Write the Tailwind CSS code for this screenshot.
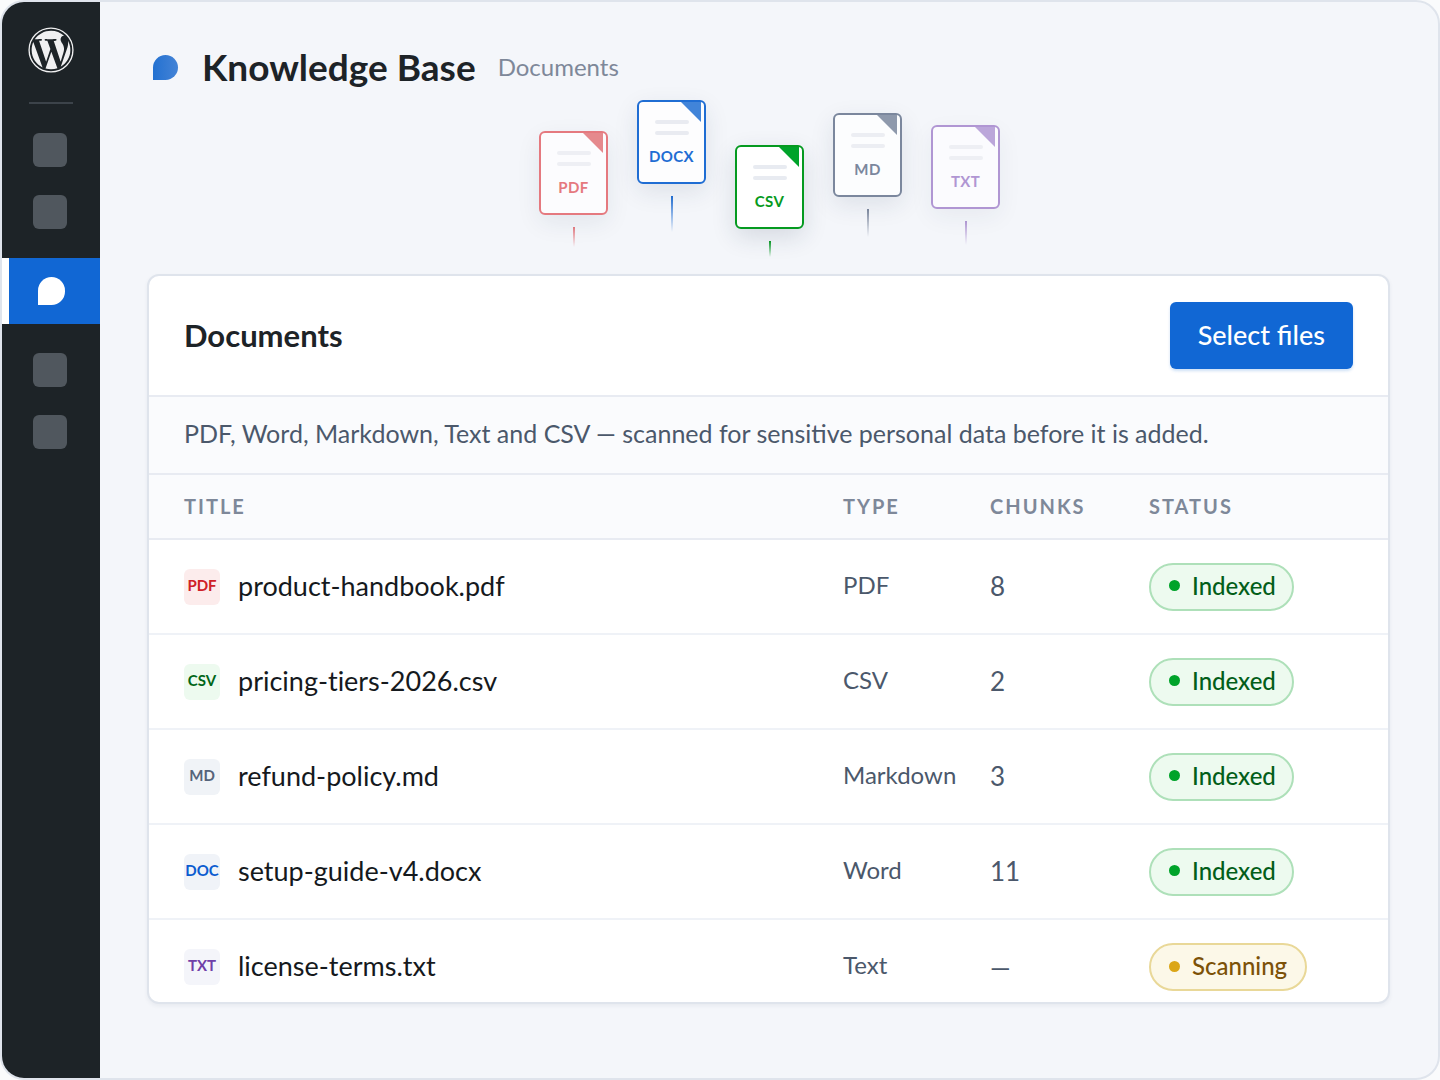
<!DOCTYPE html>
<html lang="en">
<head>
  <meta charset="UTF-8" />
  <meta name="viewport" content="width=device-width, initial-scale=1.0"/>
  <title>Knowledge Base - Documents</title>
  <script src="https://cdn.jsdelivr.net/npm/@tailwindcss/browser@4"></script>
</head>
<body class="bg-[#fafbfc] font-[Lato,'Open_Sans',sans-serif] text-[#1d2327]">

  <div class="flex min-h-screen overflow-hidden rounded-3xl border-2 border-[#dfe4ec] bg-[#f4f6fa]">

    <!-- Sidebar -->
    <nav class="flex w-[98px] shrink-0 flex-col items-center bg-[#1d2327] pt-6" aria-label="Admin menu">
      <a href="#" aria-label="WordPress">
        <svg class="size-12" viewBox="-0.7 -0.7 25.4 25.4" fill="#f0f0f1">
          <circle cx="12" cy="12" r="11.6" fill="none" stroke="#f0f0f1" stroke-width="0.7"/>
          <path transform="translate(0.6 0.6) scale(0.95)" d="M21.469 6.825c.84 1.537 1.318 3.3 1.318 5.175 0 3.979-2.156 7.456-5.363 9.325l3.295-9.527c.615-1.54.82-2.771.82-3.864 0-.405-.026-.78-.07-1.11m-7.981.105c.647-.03 1.232-.105 1.232-.105.582-.075.514-.93-.067-.899 0 0-1.755.135-2.88.135-1.064 0-2.85-.15-2.85-.15-.585-.03-.661.855-.075.885 0 0 .54.061 1.125.09l1.68 4.605-2.37 7.08L5.354 6.9c.649-.03 1.234-.1 1.234-.1.585-.075.516-.93-.065-.896 0 0-1.746.138-2.874.138-.2 0-.438-.008-.69-.015C4.911 3.15 8.235 1.215 12 1.215c2.809 0 5.365 1.072 7.286 2.833-.046-.003-.091-.009-.141-.009-1.06 0-1.812.923-1.812 1.914 0 .89.513 1.643 1.06 2.531.411.72.89 1.643.89 2.977 0 .915-.354 1.994-.821 3.479l-1.075 3.585-3.9-11.61zM12 22.784c-1.059 0-2.081-.153-3.048-.437l3.237-9.406 3.315 9.087c.024.053.05.101.078.149-1.12.393-2.325.609-3.582.609M1.211 12c0-1.564.336-3.05.935-4.39L7.29 21.709C3.694 19.96 1.212 16.271 1.211 12"/>
        </svg>
      </a>
      <div class="mt-7 h-0.5 w-11 bg-[#3c434a]"></div>
      <div class="mr-0.5 flex flex-col gap-7 py-[29px]">
        <a href="#" aria-label="Menu item" class="size-[34px] rounded-md bg-[#50575e]"></a>
        <a href="#" aria-label="Menu item" class="size-[34px] rounded-md bg-[#50575e]"></a>
      </div>
      <a href="#" aria-label="Knowledge Base" class="flex h-[66px] w-full items-center justify-center border-l-[7px] border-white bg-[#1167d4] pr-[7px]">
        <span class="h-7 w-[27px] rounded-full rounded-bl-none bg-white"></span>
      </a>
      <div class="mr-0.5 flex flex-col gap-7 py-[29px]">
        <a href="#" aria-label="Menu item" class="size-[34px] rounded-md bg-[#50575e]"></a>
        <a href="#" aria-label="Menu item" class="size-[34px] rounded-md bg-[#50575e]"></a>
      </div>
    </nav>

    <!-- Content -->
    <main class="min-w-0 grow pt-[41px] pr-12 pb-[72px] pl-[47px]">
      <header class="flex h-12 items-center pl-1.5">
        <span class="size-[25px] rounded-full rounded-bl-none bg-linear-to-r from-[#2271d1] to-[#4383d6]"></span>
        <h1 class="ml-6 text-[37px] font-bold">Knowledge Base</h1>
        <span class="ml-[22px] text-2xl text-[#7e8899]">Documents</span>
      </header>

      <!-- Falling files -->
      <div class="flex h-[183px] items-start justify-center gap-[29px] pl-0.5 text-[15px] leading-5 font-bold tracking-wide">
        <div class="mt-10 flex flex-col items-center gap-3 text-[#e5797f]">
          <div class="relative flex h-[84px] w-[69px] flex-col items-center gap-[7px] rounded-md border-2 border-current bg-[#fcfcfe] pt-[18px] shadow-[0_8px_24px_rgba(30,50,80,0.08)]">
            <svg class="absolute top-0 right-[3px] size-5" viewBox="0 0 20 20"><path d="M0 0h20v20z" fill="#e5898d"/></svg>
            <span class="h-1 w-[34px] rounded-full bg-[#eeeff4]"></span>
            <span class="h-1 w-[34px] rounded-full bg-[#eeeff4]"></span>
            <span class="mt-1">PDF</span>
          </div>
          <span class="h-5 w-0.5 bg-linear-to-b from-current to-transparent"></span>
        </div>
        <div class="mt-[9px] flex flex-col items-center gap-3 text-[#1f6dd3]">
          <div class="relative flex h-[84px] w-[69px] flex-col items-center gap-[7px] rounded-md border-2 border-current bg-[#fdfdfe] pt-[18px] shadow-[0_8px_24px_rgba(30,50,80,0.1)]">
            <svg class="absolute top-0 right-[3px] size-5" viewBox="0 0 20 20"><path d="M0 0h20v20z" fill="#4184d9"/></svg>
            <span class="h-1 w-[34px] rounded-full bg-[#e9ebf1]"></span>
            <span class="h-1 w-[34px] rounded-full bg-[#e9ebf1]"></span>
            <span class="mt-1">DOCX</span>
          </div>
          <span class="h-9 w-0.5 bg-linear-to-b from-current to-transparent"></span>
        </div>
        <div class="mt-[54px] flex flex-col items-center gap-3 text-[#059a20]">
          <div class="relative flex h-[84px] w-[69px] flex-col items-center gap-[7px] rounded-md border-2 border-current bg-white pt-[18px] shadow-[0_8px_24px_rgba(30,50,80,0.14)]">
            <svg class="absolute top-0 right-[3px] size-5" viewBox="0 0 20 20"><path d="M0 0h20v20z" fill="#00a32a"/></svg>
            <span class="h-1 w-[34px] rounded-full bg-[#e8ebf1]"></span>
            <span class="h-1 w-[34px] rounded-full bg-[#e8ebf1]"></span>
            <span class="mt-1">CSV</span>
          </div>
          <span class="h-4 w-0.5 bg-linear-to-b from-current to-transparent"></span>
        </div>
        <div class="mt-[22px] flex flex-col items-center gap-3 text-[#7b879d]">
          <div class="relative flex h-[84px] w-[69px] flex-col items-center gap-[7px] rounded-md border-2 border-current bg-[#fcfdfe] pt-[18px] shadow-[0_8px_24px_rgba(30,50,80,0.1)]">
            <svg class="absolute top-0 right-[3px] size-5" viewBox="0 0 20 20"><path d="M0 0h20v20z" fill="#8e99ac"/></svg>
            <span class="h-1 w-[34px] rounded-full bg-[#eceef3]"></span>
            <span class="h-1 w-[34px] rounded-full bg-[#eceef3]"></span>
            <span class="mt-1">MD</span>
          </div>
          <span class="h-7 w-0.5 bg-linear-to-b from-current to-transparent"></span>
        </div>
        <div class="mt-[34px] flex flex-col items-center gap-3 text-[#b096d3]">
          <div class="relative flex h-[84px] w-[69px] flex-col items-center gap-[7px] rounded-md border-2 border-current bg-[#fbfbfe] pt-[18px] shadow-[0_8px_24px_rgba(30,50,80,0.06)]">
            <svg class="absolute top-0 right-[3px] size-5" viewBox="0 0 20 20"><path d="M0 0h20v20z" fill="#bba6da"/></svg>
            <span class="h-1 w-[34px] rounded-full bg-[#eeeff4]"></span>
            <span class="h-1 w-[34px] rounded-full bg-[#eeeff4]"></span>
            <span class="mt-1">TXT</span>
          </div>
          <span class="h-6 w-0.5 bg-linear-to-b from-current to-transparent"></span>
        </div>
      </div>

      <!-- Documents card -->
      <section class="overflow-hidden rounded-xl border-2 border-[#dfe4ec] bg-white shadow-[0_2px_4px_rgba(30,50,80,0.06)]">
        <div class="flex h-[121px] items-center justify-between border-b-2 border-[#e8ebf2] px-[35px]">
          <h2 class="text-[31px] font-bold">Documents</h2>
          <button type="button" class="h-[67px] rounded-md bg-[#1167d4] px-7 text-[27px] font-medium text-white shadow-[0_2px_3px_rgba(17,103,212,0.2)]">Select files</button>
        </div>
        <p class="flex h-[78px] items-center border-b-2 border-[#e8ebf2] bg-[#fafbfd] px-[35px] pb-0.5 text-[25px] text-[#4b586b]">PDF, Word, Markdown, Text and CSV — scanned for sensitive personal data before it is added.</p>

        <table class="w-full table-fixed text-left [font-variant-ligatures:none]">
          <thead class="bg-[#fafbfd] text-xl tracking-widest text-[#7e8899] uppercase">
            <tr class="h-16 border-b-2 border-[#e8ebf2]">
              <th class="pb-0.5 pl-[35px] font-bold">Title</th>
              <th class="w-[147px] pb-0.5 font-bold">Type</th>
              <th class="w-[159px] pb-0.5 font-bold">Chunks</th>
              <th class="w-[239px] pb-0.5 font-bold">Status</th>
            </tr>
          </thead>
          <tbody class="text-2xl text-[#4b586b]">
            <tr class="h-[95px] border-b-2 border-[#eff2f7]">
              <td class="pl-[35px]">
                <div class="flex items-center gap-[18px]">
                  <span class="flex size-9 items-center justify-center rounded-md bg-[#fcecec] pb-0.5 text-[15px] font-bold text-[#cf2027]">PDF</span>
                  <a href="#" class="pb-0.5 text-[27px] leading-9 text-[#15191d]">product-handbook.pdf</a>
                </div>
              </td>
              <td class="pb-1">PDF</td>
              <td class="text-[26px]">8</td>
              <td>
                <span class="inline-flex h-12 items-center gap-3 rounded-full border-2 border-[#aee0b9] bg-[#edfaef] pr-4 pb-0.5 pl-[18px] align-middle font-medium text-[#035e19]">
                  <span class="size-[11px] rounded-full bg-[#00a32a]"></span>Indexed
                </span>
              </td>
            </tr>
            <tr class="h-[95px] border-b-2 border-[#eff2f7]">
              <td class="pl-[35px]">
                <div class="flex items-center gap-[18px]">
                  <span class="flex size-9 items-center justify-center rounded-md bg-[#edfaef] pb-0.5 text-[15px] font-bold text-[#006618]">CSV</span>
                  <a href="#" class="pb-0.5 text-[27px] leading-9 text-[#15191d]">pricing-tiers-2026.csv</a>
                </div>
              </td>
              <td class="pb-1">CSV</td>
              <td class="text-[26px]">2</td>
              <td>
                <span class="inline-flex h-12 items-center gap-3 rounded-full border-2 border-[#aee0b9] bg-[#edfaef] pr-4 pb-0.5 pl-[18px] align-middle font-medium text-[#035e19]">
                  <span class="size-[11px] rounded-full bg-[#00a32a]"></span>Indexed
                </span>
              </td>
            </tr>
            <tr class="h-[95px] border-b-2 border-[#eff2f7]">
              <td class="pl-[35px]">
                <div class="flex items-center gap-[18px]">
                  <span class="flex size-9 items-center justify-center rounded-md bg-[#f0f3f7] pb-0.5 text-[15px] font-bold text-[#56637a]">MD</span>
                  <a href="#" class="pb-0.5 text-[27px] leading-9 text-[#15191d]">refund-policy.md</a>
                </div>
              </td>
              <td class="pb-1">Markdown</td>
              <td class="text-[26px]">3</td>
              <td>
                <span class="inline-flex h-12 items-center gap-3 rounded-full border-2 border-[#aee0b9] bg-[#edfaef] pr-4 pb-0.5 pl-[18px] align-middle font-medium text-[#035e19]">
                  <span class="size-[11px] rounded-full bg-[#00a32a]"></span>Indexed
                </span>
              </td>
            </tr>
            <tr class="h-[95px] border-b-2 border-[#eff2f7]">
              <td class="pl-[35px]">
                <div class="flex items-center gap-[18px]">
                  <span class="flex size-9 items-center justify-center rounded-md bg-[#f0f3f8] pb-0.5 text-[15px] font-bold text-[#0b5cd0]">DOC</span>
                  <a href="#" class="pb-0.5 text-[27px] leading-9 text-[#15191d]">setup-guide-v4.docx</a>
                </div>
              </td>
              <td class="pb-1">Word</td>
              <td class="text-[26px]">11</td>
              <td>
                <span class="inline-flex h-12 items-center gap-3 rounded-full border-2 border-[#aee0b9] bg-[#edfaef] pr-4 pb-0.5 pl-[18px] align-middle font-medium text-[#035e19]">
                  <span class="size-[11px] rounded-full bg-[#00a32a]"></span>Indexed
                </span>
              </td>
            </tr>
            <tr class="h-[83px]">
              <td class="pt-3 pl-[35px]">
                <div class="flex items-center gap-[18px]">
                  <span class="flex size-9 items-center justify-center rounded-md bg-[#f4f5fa] pb-0.5 text-[15px] font-bold text-[#7040a8]">TXT</span>
                  <a href="#" class="pb-0.5 text-[27px] leading-9 text-[#15191d]">license-terms.txt</a>
                </div>
              </td>
              <td class="pt-3 pb-1">Text</td>
              <td class="pt-3 text-[26px]">—</td>
              <td class="pt-3">
                <span class="inline-flex h-12 items-center gap-3 rounded-full border-2 border-[#e9d898] bg-[#fcf8e8] pr-[18px] pb-0.5 pl-[18px] align-middle font-medium text-[#7c5208]">
                  <span class="size-[11px] rounded-full bg-[#dba617]"></span>Scanning
                </span>
              </td>
            </tr>
          </tbody>
        </table>
      </section>
    </main>
  </div>

</body>
</html>
